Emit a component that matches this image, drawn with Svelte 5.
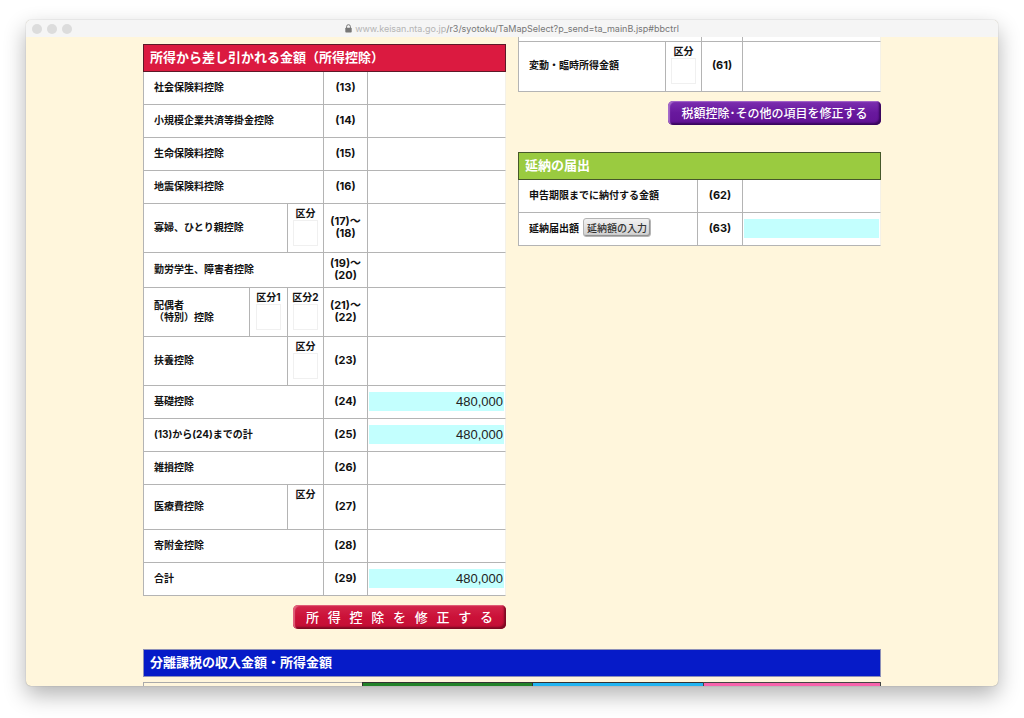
<script>
  const deductions = [
    { label: '社会保険料控除', no: '(13)' },
    { label: '小規模企業共済等掛金控除', no: '(14)' },
    { label: '生命保険料控除', no: '(15)' },
    { label: '地震保険料控除', no: '(16)' },
    { label: '寡婦、ひとり親控除', no: '(17)～\n(18)', kinds: ['区分'], size: 'tall' },
    { label: '勤労学生、障害者控除', no: '(19)～\n(20)', size: 'mid' },
    { label: '配偶者\n（特別）控除', no: '(21)～\n(22)', kinds: ['区分1', '区分2'], size: 'tall' },
    { label: '扶養控除', no: '(23)', kinds: ['区分'], size: 'tall' },
    { label: '基礎控除', no: '(24)', value: '480,000' },
    { label: '(13)から(24)までの計', no: '(25)', value: '480,000' },
    { label: '雑損控除', no: '(26)' },
    { label: '医療費控除', no: '(27)', kinds: ['区分'], size: 'medical', noBox: true },
    { label: '寄附金控除', no: '(28)' },
    { label: '合計', no: '(29)', value: '480,000' }
  ];
</script>

<div class="window">
  <header class="titlebar">
    <div class="lights"><i></i><i></i><i></i></div>
    <div class="address">
      <svg width="7" height="9" viewBox="0 0 7 9" aria-hidden="true">
        <path d="M1.6 4V2.6a1.9 1.9 0 0 1 3.8 0V4" fill="none" stroke="#777" stroke-width="1" />
        <rect x="0.3" y="3.8" width="6.4" height="4.8" rx="0.8" fill="#777" />
      </svg>
      <span><span class="host">www.keisan.nta.go.jp</span>/r3/syotoku/TaMapSelect?p_send=ta_mainB.jsp#bbctrl</span>
    </div>
    <div></div>
  </header>

  <main>
    <div class="page">
      <div class="columns">
        <section class="left">
          <table>
            <colgroup>
              <col class="c-name" /><col class="c-kind1" /><col class="c-kind2" /><col class="c-no" /><col />
            </colgroup>
            <thead>
              <tr><th class="head red" colspan="5">所得から差し引かれる金額（所得控除）</th></tr>
            </thead>
            <tbody>
              {#each deductions as row}
                <tr class={row.size ?? 'normal'}>
                  <th class="name" colspan={3 - (row.kinds?.length ?? 0)}>{row.label}</th>
                  {#each row.kinds ?? [] as kind}
                    <td class="kind">
                      {#if row.noBox}
                        {kind}
                      {:else}
                        <label>{kind}<input class="box" readonly /></label>
                      {/if}
                    </td>
                  {/each}
                  <td class="no">{row.no}</td>
                  <td class="value">
                    {#if row.value}
                      <input class="amount" readonly value={row.value} aria-label={row.label} />
                    {/if}
                  </td>
                </tr>
              {/each}
            </tbody>
          </table>
          <button class="action crimson">所   得   控   除   を   修   正   す   る</button>
        </section>

        <section class="right">
          <table>
            <colgroup>
              <col class="r-name" /><col class="c-kind2" /><col class="r-no" /><col />
            </colgroup>
            <tbody>
              <tr class="sliver"><td class="edge" colspan="2"></td><td></td><td class="last"></td></tr>
              <tr class="tall61">
                <th class="name">変動・臨時所得金額</th>
                <td class="kind"><label>区分<input class="box" readonly /></label></td>
                <td class="no">(61)</td>
                <td class="value"></td>
              </tr>
            </tbody>
          </table>
          <button class="action purple">税額控除･その他の項目を修正する</button>

          <table class="deferral">
            <colgroup>
              <col class="d-name" /><col class="d-no" /><col />
            </colgroup>
            <thead>
              <tr><th class="head green" colspan="3">延納の届出</th></tr>
            </thead>
            <tbody>
              <tr class="normal">
                <th class="name">申告期限までに納付する金額</th>
                <td class="no">(62)</td>
                <td class="value"></td>
              </tr>
              <tr class="normal">
                <th class="name">
                  <div class="inline"><span>延納届出額</span><button class="small">延納額の入力</button></div>
                </th>
                <td class="no">(63)</td>
                <td class="value"><input class="amount" readonly aria-label="延納届出額" /></td>
              </tr>
            </tbody>
          </table>
        </section>
      </div>

      <h2>分離課税の収入金額・所得金額</h2>
      <div class="tabs"><div></div><div class="t-green"></div><div class="t-sky"></div><div class="t-pink"></div></div>
    </div>
  </main>
</div>

<style>
  :global(body) {
    background: #fff;
    overflow: hidden;
  }
  .window {
    display: flex;
    flex-direction: column;
    height: calc(100vh - 52px);
    margin: 20px 26px 32px;
    overflow: hidden;
    border-radius: 5px;
    background: #fff6dc;
    box-shadow: 0 0 1px rgba(0, 0, 0, 0.4), 0 9px 22px rgba(0, 0, 0, 0.3);
    font-family: Inter, "Noto Sans CJK JP", sans-serif;
    color: #111;
  }
  .titlebar {
    display: grid;
    grid-template-columns: 1fr auto 1fr;
    align-items: center;
    flex: none;
    height: 17px;
    background: #f5f5f5;
  }
  .lights {
    display: flex;
    gap: 5px;
    padding-left: 6px;
  }
  .lights i {
    width: 10px;
    height: 10px;
    border-radius: 50%;
    background: #dcdcdc;
  }
  .address {
    display: flex;
    align-items: center;
    gap: 3px;
    font-size: 9px;
    line-height: 16px;
    color: #777;
  }
  .host {
    color: #b4b4b4;
  }
  main {
    flex: 1;
    min-height: 0;
    overflow: hidden;
  }
  .page {
    max-width: 738px;
    margin: 0 auto;
  }
  .columns {
    display: grid;
    grid-template-columns: 1fr 1fr;
    gap: 12px;
  }
  section {
    display: flex;
    flex-direction: column;
    align-items: flex-end;
  }
  .left {
    padding-top: 7px;
  }
  table {
    width: 100%;
    table-layout: fixed;
    border-collapse: separate;
    border-spacing: 0;
    background: #fff;
    font-size: 10px;
    font-weight: 700;
    line-height: 12px;
  }
  th, td {
    box-sizing: border-box;
    padding: 0;
    border: 0 solid #b4b4b4;
    border-width: 0 1px 1px 0;
  }
  .c-name { width: 107px; }
  .c-kind1 { width: 38px; }
  .c-kind2 { width: 36px; }
  .c-no { width: 44px; }
  .r-name { width: 148px; }
  .r-no { width: 41px; }
  .d-name { width: 180px; }
  .d-no { width: 45px; }
  .head {
    height: 28px;
    padding: 0 0 2px 6px;
    border: 1px solid #333;
    text-align: left;
    font-size: 13px;
    line-height: 20px;
    color: #fff;
  }
  .red {
    background: #db1a40;
    border-color: #5c1a28;
  }
  .green {
    background: #9acb40;
    border-color: #46582a;
  }
  .name {
    padding: 0 0 3px 10px;
    border-left-width: 1px;
    text-align: left;
    white-space: pre-line;
  }
  .edge {
    border-left-width: 1px;
  }
  .no {
    padding-bottom: 3px;
    text-align: center;
    font-size: 11px;
    white-space: pre-line;
  }
  .value {
    padding: 0 1px 2px 1px;
    border-right-color: #f4f1e8;
  }
  .last {
    border-right-color: #f4f1e8;
  }
  .kind {
    padding-top: 3px;
    vertical-align: top;
    text-align: center;
  }
  .kind label {
    display: flex;
    flex-direction: column;
    align-items: center;
  }
  .box {
    box-sizing: border-box;
    width: 25px;
    height: 26px;
    margin-top: 1px;
    padding: 0;
    border: 1px solid #f0f0f0;
    background: #fff;
  }
  .normal { height: 33px; }
  .tall { height: 49px; }
  .mid { height: 35px; }
  .medical { height: 45px; }
  .sliver { height: 5px; }
  .tall61 { height: 50px; }
  .amount {
    display: block;
    box-sizing: border-box;
    width: 100%;
    height: 19px;
    padding: 0 1px 0 0;
    border: 0;
    background: #c3fffe;
    text-align: right;
    font: 13px "Liberation Sans", Arial, sans-serif;
    color: #222;
  }
  .action {
    box-sizing: border-box;
    width: 213px;
    height: 24px;
    margin-top: 9px;
    padding: 0;
    border: 0;
    border-radius: 5px;
    text-align: center;
    white-space: pre;
    font: 500 13px "Noto Sans CJK JP", sans-serif;
    line-height: 22px;
    color: #fff;
  }
  .crimson {
    background: linear-gradient(#d3274c, #cb1138 50%, #c40f35);
    box-shadow: inset 2px 1px 1px #e0627c, inset -2px -2px 2px #7c0a22;
  }
  .purple {
    font-size: 12px;
    background: linear-gradient(#7c2fb0, #68189d 50%, #621296);
    box-shadow: inset 2px 1px 1px #a56bca, inset -2px -2px 2px #38065c;
  }
  .deferral {
    margin-top: 27px;
  }
  .inline {
    display: flex;
    align-items: center;
    gap: 4px;
  }
  .small {
    height: 19px;
    padding: 0 3px;
    border: 1px solid #b4b4b4;
    border-radius: 3px;
    background: linear-gradient(#f2f2f2, #cfcfcf);
    box-shadow: inset -1px -1px 1px #8c8c8c;
    font: 500 10px "Noto Sans CJK JP", sans-serif;
    line-height: 16px;
    color: #333;
  }
  h2 {
    box-sizing: border-box;
    height: 28px;
    margin: 20px 0 5px;
    padding-left: 6px;
    border: 1px solid #8d90b8;
    background: #061bc8;
    font-size: 13px;
    font-weight: 700;
    line-height: 24px;
    color: #fff;
  }
  .tabs {
    display: grid;
    grid-template-columns: 219fr 170fr 171fr 178fr;
    height: 28px;
  }
  .tabs div {
    border: 1px solid #aaa;
    border-right: 0;
  }
  .tabs .t-green { background: #238229; border-color: #333; }
  .tabs .t-sky { background: #22b4f0; border-color: #333; }
  .tabs .t-pink { background: #f763ac; border-color: #444; border-right: 1px solid #444; }
</style>
